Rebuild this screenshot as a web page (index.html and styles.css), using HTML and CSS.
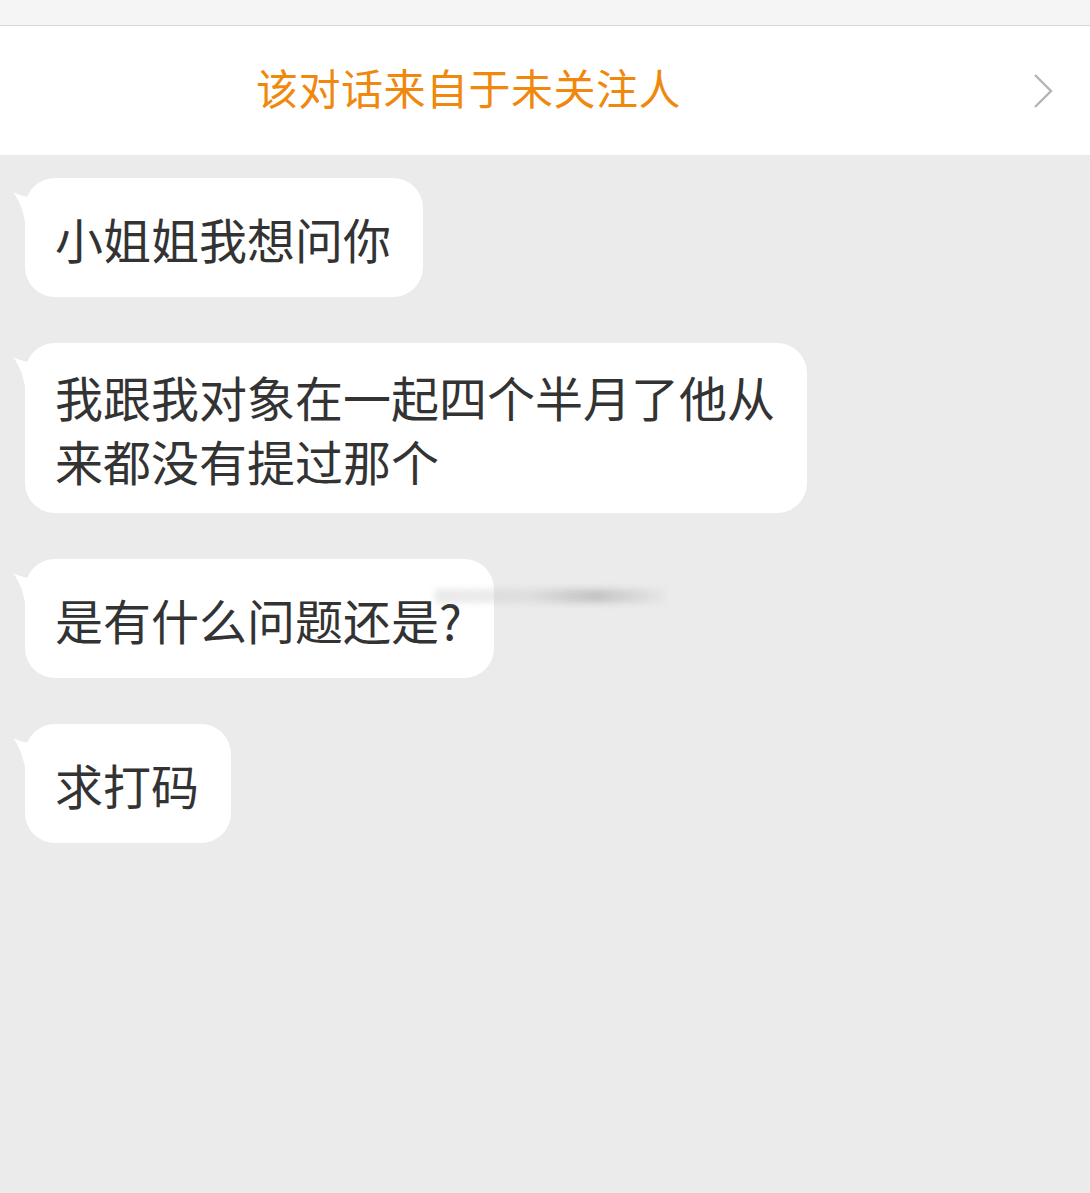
FILE: index.html
```html
<!DOCTYPE html>
<html lang="zh-CN">
<head>
    <meta charset="UTF-8">
    <meta name="viewport" content="width=device-width, initial-scale=1.0">
    <title>聊天</title>
    <link rel="stylesheet" href="styles.css">
</head>
<body>

    <div class="topbar"></div>

    <div class="notice">
        <span class="notice-text">该对话来自于未关注人</span>
        <svg class="chevron" width="22" height="36" viewBox="0 0 22 36">
            <path d="M3 2 L19 18 L3 34" fill="none" stroke="#b4b4b4" stroke-width="2.4"/>
        </svg>
    </div>

    <div class="chat">
        <div class="msg">
            <svg class="tail" width="24" height="30" viewBox="0 0 24 30"><path d="M24 4 C16 6 8 4 0 0 C6 8 10 18 12 30 L24 30 Z" fill="#fff"/></svg>
            <div class="bubble">小姐姐我想问你</div>
        </div>
        <div class="msg">
            <svg class="tail" width="24" height="30" viewBox="0 0 24 30"><path d="M24 4 C16 6 8 4 0 0 C6 8 10 18 12 30 L24 30 Z" fill="#fff"/></svg>
            <div class="bubble">我跟我对象在一起四个半月了他从<br>来都没有提过那个</div>
        </div>
        <div class="msg">
            <svg class="tail" width="24" height="30" viewBox="0 0 24 30"><path d="M24 4 C16 6 8 4 0 0 C6 8 10 18 12 30 L24 30 Z" fill="#fff"/></svg>
            <div class="bubble">是有什么问题还是?</div>
            <div class="smudge"></div>
        </div>
        <div class="msg">
            <svg class="tail" width="24" height="30" viewBox="0 0 24 30"><path d="M24 4 C16 6 8 4 0 0 C6 8 10 18 12 30 L24 30 Z" fill="#fff"/></svg>
            <div class="bubble">求打码</div>
        </div>
    </div>

</body>
</html>
```

FILE: styles.css
```css
html, body {
    margin: 0;
    padding: 0;
}
body {
    font-family: "Noto Sans CJK SC", "Noto Sans", sans-serif;
    background-color: #ebebeb;
    width: 1090px;
    min-height: 1193px;
}
.topbar {
    height: 25px;
    background-color: #f5f5f5;
    border-bottom: 1px solid #d6d6d6;
}
.notice {
    height: 129px;
    background-color: #fff;
    display: flex;
    align-items: center;
    position: relative;
}
.notice-text {
    margin-left: 256px;
    margin-bottom: 8px;
    font-size: 42px;
    letter-spacing: 0.5px;
    color: #f0880e;
}
.chevron {
    margin-left: auto;
    margin-right: 36px;
}
.chat {
    padding: 23px 0 0 25px;
    display: flex;
    flex-direction: column;
    align-items: flex-start;
    gap: 46px;
}
.msg {
    position: relative;
}
.tail {
    position: absolute;
    left: -12px;
    top: 14px;
}
.bubble {
    position: relative;
    box-sizing: border-box;
    min-height: 119px;
    padding: 21px 32px 21px 30px;
    display: flex;
    align-items: center;
    background-color: #fff;
    border-radius: 30px;
    font-size: 48px;
    line-height: 64px;
    color: #333;
}
.smudge {
    position: absolute;
    left: 410px;
    top: 30px;
    width: 230px;
    height: 14px;
    background: linear-gradient(90deg, rgba(170,170,170,0.25), rgba(200,200,200,0.35) 40%, rgba(150,150,150,0.45) 70%, rgba(200,200,200,0.1));
    filter: blur(3px);
}
```
